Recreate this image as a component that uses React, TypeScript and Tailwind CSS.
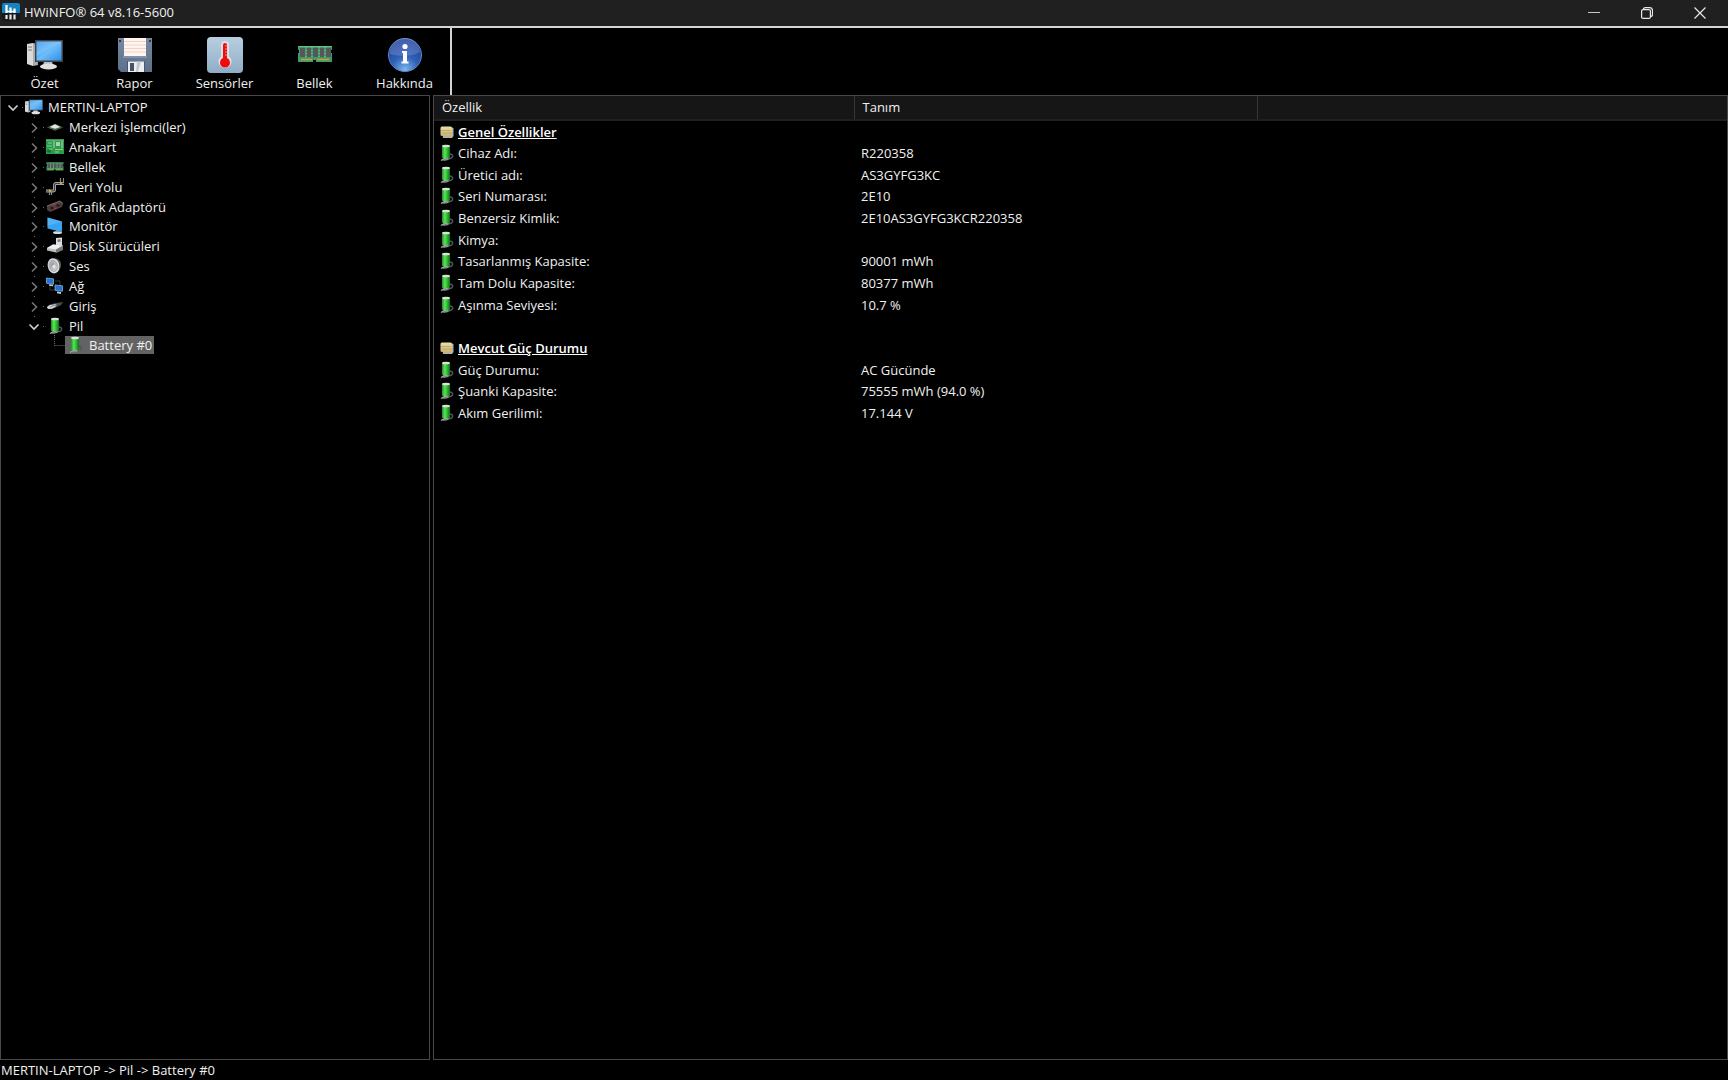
import { useState } from 'react'
import type { ReactNode } from 'react'

// gradients shared by all of the icons
function IconDefs() {
  return (
    <svg className="absolute size-0" aria-hidden="true">
      <defs>
        <linearGradient id="screen" x1="0" y1="0" x2="1" y2="1">
          <stop offset="0" stopColor="#2b8be6" />
          <stop offset="0.5" stopColor="#6dbdf8" />
          <stop offset="1" stopColor="#2f8ee8" />
        </linearGradient>
        <linearGradient id="cell" x1="0" y1="0" x2="1" y2="0">
          <stop offset="0" stopColor="#1f8f22" />
          <stop offset="0.35" stopColor="#5be35a" />
          <stop offset="0.6" stopColor="#35c236" />
          <stop offset="1" stopColor="#146b1c" />
        </linearGradient>
        <linearGradient id="thermo" x1="0" y1="0" x2="0" y2="1">
          <stop offset="0" stopColor="#b9cfe0" />
          <stop offset="1" stopColor="#8fadc6" />
        </linearGradient>
        <linearGradient id="floppy" x1="0" y1="0" x2="0" y2="1">
          <stop offset="0" stopColor="#76899f" />
          <stop offset="1" stopColor="#5c708a" />
        </linearGradient>
        <radialGradient id="info" cx="0.5" cy="0.95" r="0.9">
          <stop offset="0" stopColor="#7fb6ee" />
          <stop offset="0.45" stopColor="#2f62b8" />
          <stop offset="1" stopColor="#1d3a92" />
        </radialGradient>
        <radialGradient id="cone" cx="0.45" cy="0.45" r="0.6">
          <stop offset="0" stopColor="#8a9096" />
          <stop offset="0.5" stopColor="#c3c7ca" />
          <stop offset="1" stopColor="#eef0f0" />
        </radialGradient>
        <linearGradient id="folder" x1="0" y1="0" x2="0" y2="1">
          <stop offset="0" stopColor="#efe0a8" />
          <stop offset="1" stopColor="#c9b377" />
        </linearGradient>
      </defs>
    </svg>
  )
}

function ComputerIcon({ className }: { className: string }) {
  return (
    <svg className={className} viewBox="0 0 36 36" aria-hidden="true">
      <path d="M0 7l6-1v23l-6-2z" fill="#d9dadb" />
      <path d="M6 6l5 1v21l-5 1z" fill="#a9abad" />
      <path d="M1 10h4M1 13h4" stroke="#77797b" strokeWidth="1" />
      <path d="M17 24h8l1 5h-10z" fill="#b9bcbe" />
      <ellipse cx="21.500" cy="29.500" rx="8.500" ry="3" fill="#dfe1e2" />
      <rect x="8" y="3" width="28" height="22" fill="#3c4247" />
      <rect x="9.500" y="4.500" width="25" height="19" fill="url(#screen)" />
      <path d="M9.500 4.500h25L9.500 19z" fill="#a9dbff" opacity="0.35" />
    </svg>
  )
}

function FloppyIcon({ className }: { className: string }) {
  return (
    <svg className={className} viewBox="0 0 36 36" aria-hidden="true">
      <path d="M1 1h34v34H4l-3-3z" fill="url(#floppy)" />
      <path d="M2 3h2v2H2zM32 3h2v2h-2z" fill="#2f3b4c" />
      <rect x="7" y="1" width="22" height="18" fill="#fdf6f0" />
      <path d="M7 4.500h22M7 8h22M7 11.500h22M7 15h22" stroke="#f5cfc4" strokeWidth="1.200" />
      <rect x="6" y="19" width="24" height="2" fill="#8394a8" />
      <rect x="10" y="24" width="18" height="11" fill="#47576d" />
      <rect x="11" y="24.500" width="16" height="10.500" fill="#eceff1" />
      <rect x="13" y="26" width="4" height="8" fill="#465366" />
      <path d="M20 24.500h4l-3 10.500h-2z" fill="#c3c9ce" />
    </svg>
  )
}

function ThermometerIcon({ className }: { className: string }) {
  return (
    <svg className={className} viewBox="0 0 36 36" aria-hidden="true">
      <rect width="36" height="36" rx="4" fill="url(#thermo)" />
      <path d="M18 4a4 4 0 0 0-4 4v11.500a6.500 6.500 0 1 0 8 0V8a4 4 0 0 0-4-4z" fill="#d9e2ea" />
      <path d="M16 8a2 2 0 0 1 4 0v13a5 5 0 1 1-4 0z" fill="#ee0d0d" />
      <path d="M18 9h3M18 12h3M18 15h3M18 18h3" stroke="#f6b5b5" strokeWidth="0.800" />
    </svg>
  )
}

function MemoryIcon({ className }: { className: string }) {
  return (
    <svg className={className} viewBox="0 0 36 36" aria-hidden="true">
      <path d="M1 9h34v16H19v-2h-3v2H1z" fill="#3f9a68" />
      <path d="M1 9.500h34" stroke="#67bd8c" />
      <path d="M3 11h5v9H3zM10 11h4v9h-4zM16 11h5v9h-5zM23 11h4v9h-4zM29 11h5v9h-5z" fill="#565759" />
      <path d="M9 10v11M15 10v11M22 10v11M28 10v11" stroke="#92d3ae" strokeWidth="0.800" strokeDasharray="1 2" />
      <path d="M4 22.500h11M20 22.500h12" stroke="#d09a3c" strokeWidth="1.500" />
      <path d="M0 13h2v3H0zM34 13h2v3h-2z" fill="#000" />
    </svg>
  )
}

function InfoIcon({ className }: { className: string }) {
  return (
    <svg className={className} viewBox="0 0 36 36" aria-hidden="true">
      <circle cx="18" cy="18" r="16.500" fill="url(#info)" stroke="#5b87c9" strokeWidth="1" />
      <path d="M3 17a15 15 0 0 1 30-2C27 19 14 20 3 17z" fill="#8fa6dc" opacity="0.35" />
      <circle cx="18" cy="9.500" r="2.600" fill="#fff" />
      <path d="M15 14h5v10.500h1.500v2h-7v-2H16V16h-1z" fill="#fff" />
    </svg>
  )
}

// green cell with its grey cable lying at the foot
function BatteryIcon({ className }: { className: string }) {
  return (
    <svg className={className} viewBox="0 0 18 18" aria-hidden="true">
      <path d="M12.500 10c4.500 0.500 4 3.500 0 4.800" fill="none" stroke="#50565a" strokeWidth="1.300" />
      <path d="M3.500 16.500l3-2.500h7l-2 2-4 1z" fill="#6d7274" />
      <path d="M5 2h8v11.500c-2 1.500-6 1.500-8 0z" fill="url(#cell)" />
      <ellipse cx="9" cy="2" rx="4" ry="1.300" fill="#d5e6d3" />
      <path d="M4 16.500c1.500-1.500 4-2 7-1.500" fill="none" stroke="#b0b4b6" strokeWidth="1" />
    </svg>
  )
}

function FolderIcon({ className }: { className: string }) {
  return (
    <svg className={className} viewBox="0 0 14 14" aria-hidden="true">
      <path d="M2 2.500h10.500l1 1v7.500L12 13H3z" fill="#b5b2a4" />
      <rect x="0.500" y="1.500" width="11.500" height="9.500" rx="1.500" fill="url(#folder)" />
      <path d="M1 5.500h10M2 8h10" stroke="#b09a5c" strokeWidth="0.700" />
    </svg>
  )
}

function CpuIcon() {
  return (
    <svg className="size-[18px]" viewBox="0 0 18 18" aria-hidden="true">
      <path d="M0.500 9.300L9 5.800l8.500 3.500L9 12.800z" fill="#38483a" />
      <path d="M2 9.800h14L9 12.500z" fill="#4f6050" />
      <path d="M3.500 8.900L9 6.300l5.500 2.600L9 10.800z" fill="#e3e6dc" />
    </svg>
  )
}

function BoardIcon() {
  return (
    <svg className="size-[18px]" viewBox="0 0 18 18" aria-hidden="true">
      <rect y="1.500" width="18" height="14.500" fill="#2c9a4c" />
      <path d="M0 2h18M2 5h4M1 8h5M3 11h4" stroke="#7fd695" strokeWidth="0.900" />
      <rect x="10" y="4" width="4" height="4" fill="#a9cfb0" />
      <path d="M8 3v7M16 3v7" stroke="#bfe3c5" strokeWidth="0.900" />
      <path d="M9 11.500h8M9 14h4" stroke="#a8d67c" strokeWidth="0.900" />
      <rect x="1" y="12" width="4" height="2.500" fill="#1c6c35" />
    </svg>
  )
}

function BusIcon() {
  return (
    <svg className="size-[18px]" viewBox="0 0 18 18" aria-hidden="true">
      <path d="M0 13h7c1 0 1.500-0.500 1.500-1.500V7.500C8.500 6 9 5.500 10 5.500h8" fill="none" stroke="#aaaaa6" strokeWidth="3" />
      <path d="M0 13h7c1 0 1.500-0.500 1.500-1.500V7.500C8.500 6 9 5.500 10 5.500h8" fill="none" stroke="#3c3c3a" strokeWidth="1.200" />
      <path d="M14.500 0v7M17.500 0v5M3.500 11v6M5.500 13v4" stroke="#8c8c8a" strokeWidth="1.200" />
      <rect x="3" y="12" width="2" height="2" fill="#c9ac33" />
      <rect x="14" y="4.500" width="2" height="2" fill="#c9ac33" />
    </svg>
  )
}

function GpuIcon() {
  return (
    <svg className="size-[18px]" viewBox="0 0 18 18" aria-hidden="true">
      <path d="M1 8L14 3l3 2.500-1 3.500-12 5-3-2z" fill="#454143" />
      <path d="M1 8l13-5 3 2.500" fill="none" stroke="#8a8082" strokeWidth="0.800" />
      <ellipse cx="6" cy="10" rx="2.300" ry="1.700" fill="#1f1c1d" stroke="#7c3a40" strokeWidth="0.700" />
      <ellipse cx="12" cy="7.500" rx="2.300" ry="1.700" fill="#1f1c1d" stroke="#7c3a40" strokeWidth="0.700" />
      <path d="M6.500 7l3-1.200M8.500 10.800l2-0.800" stroke="#c5323c" strokeWidth="1.200" />
    </svg>
  )
}

function MonitorIcon() {
  return (
    <svg className="size-[18px]" viewBox="0 0 18 18" aria-hidden="true">
      <ellipse cx="11.500" cy="15.500" rx="4.500" ry="1.500" fill="#d6d9db" />
      <path d="M10 12h3v3h-3z" fill="#9da1a4" />
      <path d="M1.500 0.500l14.500 4v10.500L1.500 11.500z" fill="#3aa2f2" />
      <path d="M1.500 0.500l14.500 4-14.500 4.500z" fill="#6cbffa" opacity="0.500" />
    </svg>
  )
}

function DiskIcon() {
  return (
    <svg className="size-[18px]" viewBox="0 0 18 18" aria-hidden="true">
      <path d="M10 1l6-0.500v8l-6 1z" fill="#dcdfe1" />
      <path d="M11.500 2.500l3-0.300v2.500l-3 0.300z" fill="#6b7e98" />
      <path d="M1 11l6-3.500 10 1v4l-7 3-9-2z" fill="#b9bbbc" />
      <path d="M1 11l6-3.500 10 1-7 4z" fill="#ecedee" />
      <path d="M10 12.500l7-4v4.500l-7 3z" fill="#77797b" />
    </svg>
  )
}

function SpeakerIcon() {
  return (
    <svg className="size-[18px]" viewBox="0 0 18 18" aria-hidden="true">
      <path d="M9 1.500c4.500 0 6 3 6 6.500s-2.500 7-5.500 8z" fill="#55585a" />
      <ellipse cx="7.500" cy="8.800" rx="5.800" ry="7.700" fill="url(#cone)" transform="rotate(-12 7.500 8.800)" />
      <ellipse cx="7.500" cy="9" rx="3.800" ry="5.400" fill="none" stroke="#8f9498" strokeWidth="0.700" transform="rotate(-12 7.500 9)" />
      <ellipse cx="8" cy="9.500" rx="1.600" ry="2" fill="#e4e7e8" />
    </svg>
  )
}

function NetworkIcon() {
  return (
    <svg className="size-[18px]" viewBox="0 0 18 18" aria-hidden="true">
      <path d="M9 4h5v5M4 9v4h5" fill="none" stroke="#3a3f44" strokeWidth="0.900" />
      <path d="M0.500 1l7 0.800v5.500l-7-1z" fill="#2374cf" stroke="#8bbcec" strokeWidth="0.700" />
      <path d="M3 7.200l4 0.600v1.400l-4-0.500z" fill="#c6cbd0" />
      <path d="M9 8l7.500 0.800v5.500l-7.500-1z" fill="#2374cf" stroke="#8bbcec" strokeWidth="0.700" />
      <path d="M11 14.500l4 0.600v1.900l-4-0.800z" fill="#c6cbd0" />
    </svg>
  )
}

function InputIcon() {
  return (
    <svg className="size-[18px]" viewBox="0 0 18 18" aria-hidden="true">
      <path d="M7 6.500l10-1.500-2 3-6 3z" fill="#4a4e51" />
      <path d="M1 10C3 7.500 7 7 10.500 7.500c0 2.500-3.500 4.500-7 4.500-1.500 0-2.500-0.500-2.500-2z" fill="#cfd2d4" />
      <path d="M4 10.200c2-1.500 4-2 6-1.800" fill="none" stroke="#7d8184" strokeWidth="0.900" />
    </svg>
  )
}

function LogoIcon() {
  return (
    <svg className="size-[18px]" viewBox="0 0 18 18" aria-hidden="true">
      <rect width="18" height="18" rx="2" fill="#17191b" />
      <path d="M2 0h14a2 2 0 0 1 2 2v8H0V2a2 2 0 0 1 2-2z" fill="#1583c0" />
      <path d="M4.500 2v8M8.500 4.500V10M12.500 5.500V10" stroke="#fff" strokeWidth="2.200" />
      <path d="M4.500 8.500h9" stroke="#fff" strokeWidth="1.500" />
      <path d="M4.500 12v4M8.500 11.500v5M12.500 11.500v5" stroke="#e5eaed" strokeWidth="2.200" />
    </svg>
  )
}

const toolbar = [
  { label: 'Özet', Icon: ComputerIcon },
  { label: 'Rapor', Icon: FloppyIcon },
  { label: 'Sensörler', Icon: ThermometerIcon },
  { label: 'Bellek', Icon: MemoryIcon },
  { label: 'Hakkında', Icon: InfoIcon },
]

type TreeNode = { label: string; level: 0 | 1 | 2; open?: boolean; icon: ReactNode }

const tree: TreeNode[] = [
  { label: 'MERTIN-LAPTOP', level: 0, open: true, icon: <ComputerIcon className="size-[18px]" /> },
  { label: 'Merkezi İşlemci(ler)', level: 1, icon: <CpuIcon /> },
  { label: 'Anakart', level: 1, icon: <BoardIcon /> },
  { label: 'Bellek', level: 1, icon: <MemoryIcon className="size-[18px]" /> },
  { label: 'Veri Yolu', level: 1, icon: <BusIcon /> },
  { label: 'Grafik Adaptörü', level: 1, icon: <GpuIcon /> },
  { label: 'Monitör', level: 1, icon: <MonitorIcon /> },
  { label: 'Disk Sürücüleri', level: 1, icon: <DiskIcon /> },
  { label: 'Ses', level: 1, icon: <SpeakerIcon /> },
  { label: 'Ağ', level: 1, icon: <NetworkIcon /> },
  { label: 'Giriş', level: 1, icon: <InputIcon /> },
  { label: 'Pil', level: 1, open: true, icon: <BatteryIcon className="size-[18px]" /> },
  { label: 'Battery #0', level: 2, icon: <BatteryIcon className="size-[18px]" /> },
]

const indents = ['pl-[2px]', 'pl-[23px]', 'pl-[43px]']

type Row = { name: string; value?: string; heading?: boolean }

const rows: Row[] = [
  { name: 'Genel Özellikler', heading: true },
  { name: 'Cihaz Adı:', value: 'R220358' },
  { name: 'Üretici adı:', value: 'AS3GYFG3KC' },
  { name: 'Seri Numarası:', value: '2E10' },
  { name: 'Benzersiz Kimlik:', value: '2E10AS3GYFG3KCR220358' },
  { name: 'Kimya:' },
  { name: 'Tasarlanmış Kapasite:', value: '90001 mWh' },
  { name: 'Tam Dolu Kapasite:', value: '80377 mWh' },
  { name: 'Aşınma Seviyesi:', value: '10.7 %' },
  { name: '' },
  { name: 'Mevcut Güç Durumu', heading: true },
  { name: 'Güç Durumu:', value: 'AC Gücünde' },
  { name: 'Şuanki Kapasite:', value: '75555 mWh (94.0 %)' },
  { name: 'Akım Gerilimi:', value: '17.144 V' },
]

// dotted connector plus the expand arrow in front of a tree item
function Branch({ level, open }: { level: number; open?: boolean }) {
  return (
    <svg className="h-5 w-[21px] shrink-0" viewBox="0 0 21 20" fill="none" aria-hidden="true">
      {level === 2 && <path d="M10.500 0v11M10.500 10.500H21" stroke="#6b6b6b" strokeDasharray="1 1" />}
      {level === 1 && <path d="M10 0.500h1" stroke="#6b6b6b" />}
      {level < 2 && <path d="M19 10.500h1" stroke="#6b6b6b" />}
      {level < 2 && open && <path d="M5.500 8.500l4.500 4.500 4.500-4.500" stroke="#d0d0d0" strokeWidth="1.600" />}
      {level < 2 && !open && <path d="M8 6.500l4.500 4.500-4.500 4.500" stroke="#767676" strokeWidth="1.600" />}
    </svg>
  )
}

export default function App() {
  const [selected, setSelected] = useState('Battery #0')

  return (
    <div className="flex h-screen flex-col bg-black font-['Open_Sans','Noto_Sans',sans-serif] text-[13px] leading-4 text-[#f0f0f0]">
      <IconDefs />

      <header className="flex h-[26px] shrink-0 items-center justify-between bg-[#202020] pr-0.5">
        <div className="flex items-center gap-1 pb-0.5 pl-0.5">
          <LogoIcon />
          <h1>HWiNFO® 64 v8.16-5600</h1>
        </div>
        <div className="flex h-full">
          <button aria-label="Minimize" className="flex w-[53px] items-center justify-center">
            <svg className="size-3" viewBox="0 0 12 12" stroke="#c8c8c8">
              <path d="M0 5.500h12" />
            </svg>
          </button>
          <button aria-label="Restore" className="flex w-[53px] items-center justify-center">
            <svg className="size-3" viewBox="0 0 12 12" fill="none" stroke="#e8e8e8" strokeWidth="1.200">
              <rect x="0.600" y="2.600" width="8.800" height="8.800" rx="1.500" />
              <path d="M2.500 2.500C2.500 1 3.300 0.600 4.500 0.600h4a3 3 0 0 1 3 3v4c0 1.200-0.500 2-2 2" />
            </svg>
          </button>
          <button aria-label="Close" className="flex w-[53px] items-center justify-center">
            <svg className="size-3" viewBox="0 0 12 12" stroke="#e8e8e8" strokeWidth="1.200">
              <path d="M0.500 0.500l11 11M11.500 0.500l-11 11" />
            </svg>
          </button>
        </div>
      </header>

      <nav className="flex h-[69px] shrink-0 border-t-2 border-[#d4d4d4]">
        <div className="flex border-r-2 border-[#d4d4d4]">
          {toolbar.map(({ label, Icon }) => (
            <button key={label} className="flex w-[90px] flex-col items-center gap-0.5 pt-[9px] pr-px">
              <Icon className="size-9" />
              <span>{label}</span>
            </button>
          ))}
        </div>
      </nav>

      <main className="flex min-h-0 flex-1 gap-[3px]">
        <ul role="tree" className="w-[430px] shrink-0 border border-[#484848] pt-px">
          {tree.map((node, i) => (
            <li
              key={i}
              role="treeitem"
              aria-level={node.level + 1}
              aria-expanded={node.open}
              aria-selected={selected === node.label}
              className={`flex h-5 items-center nth-[6n]:h-[19px] ${indents[node.level]}`}
            >
              <Branch level={node.level} open={node.open} />
              <button
                onClick={() => setSelected(node.label)}
                className={`flex h-[18px] items-center gap-[5px] pr-0.5 pl-px ${
                  selected === node.label ? 'bg-[#636363]' : ''
                }`}
              >
                {node.icon}
                <span>{node.label}</span>
              </button>
            </li>
          ))}
        </ul>

        <section className="min-w-0 flex-1 border border-[#484848]">
          <table className="w-full table-fixed border-collapse text-left">
            <thead>
              <tr className="h-6 border-b-2 border-[#202020] bg-[#161616]">
                <th className="w-[420px] border-r border-[#363636] p-0 pb-0.5 pl-2 font-normal">Özellik</th>
                <th className="w-[403px] border-r border-[#363636] p-0 pb-0.5 pl-2 font-normal">Tanım</th>
                <td></td>
              </tr>
            </thead>
            <tbody>
              {rows.map((row, i) => (
                <tr key={i} className="h-[22px] nth-[3n]:h-[21px]">
                  <td className="p-0 pl-1.5">
                    {row.name && (
                      <div className="flex items-center">
                        {row.heading ? (
                          <FolderIcon className="mr-1 size-3.5" />
                        ) : (
                          <BatteryIcon className="-ml-[3px] mr-[3px] size-[18px]" />
                        )}
                        <span className={row.heading ? 'font-semibold text-white underline' : ''}>{row.name}</span>
                      </div>
                    )}
                  </td>
                  <td className="p-0 pl-[7px]">{row.value}</td>
                  <td></td>
                </tr>
              ))}
            </tbody>
          </table>
        </section>
      </main>

      <footer className="flex h-5 shrink-0 items-center pl-px">
        <span>MERTIN-LAPTOP -&gt; Pil -&gt; {selected}</span>
      </footer>
    </div>
  )
}
